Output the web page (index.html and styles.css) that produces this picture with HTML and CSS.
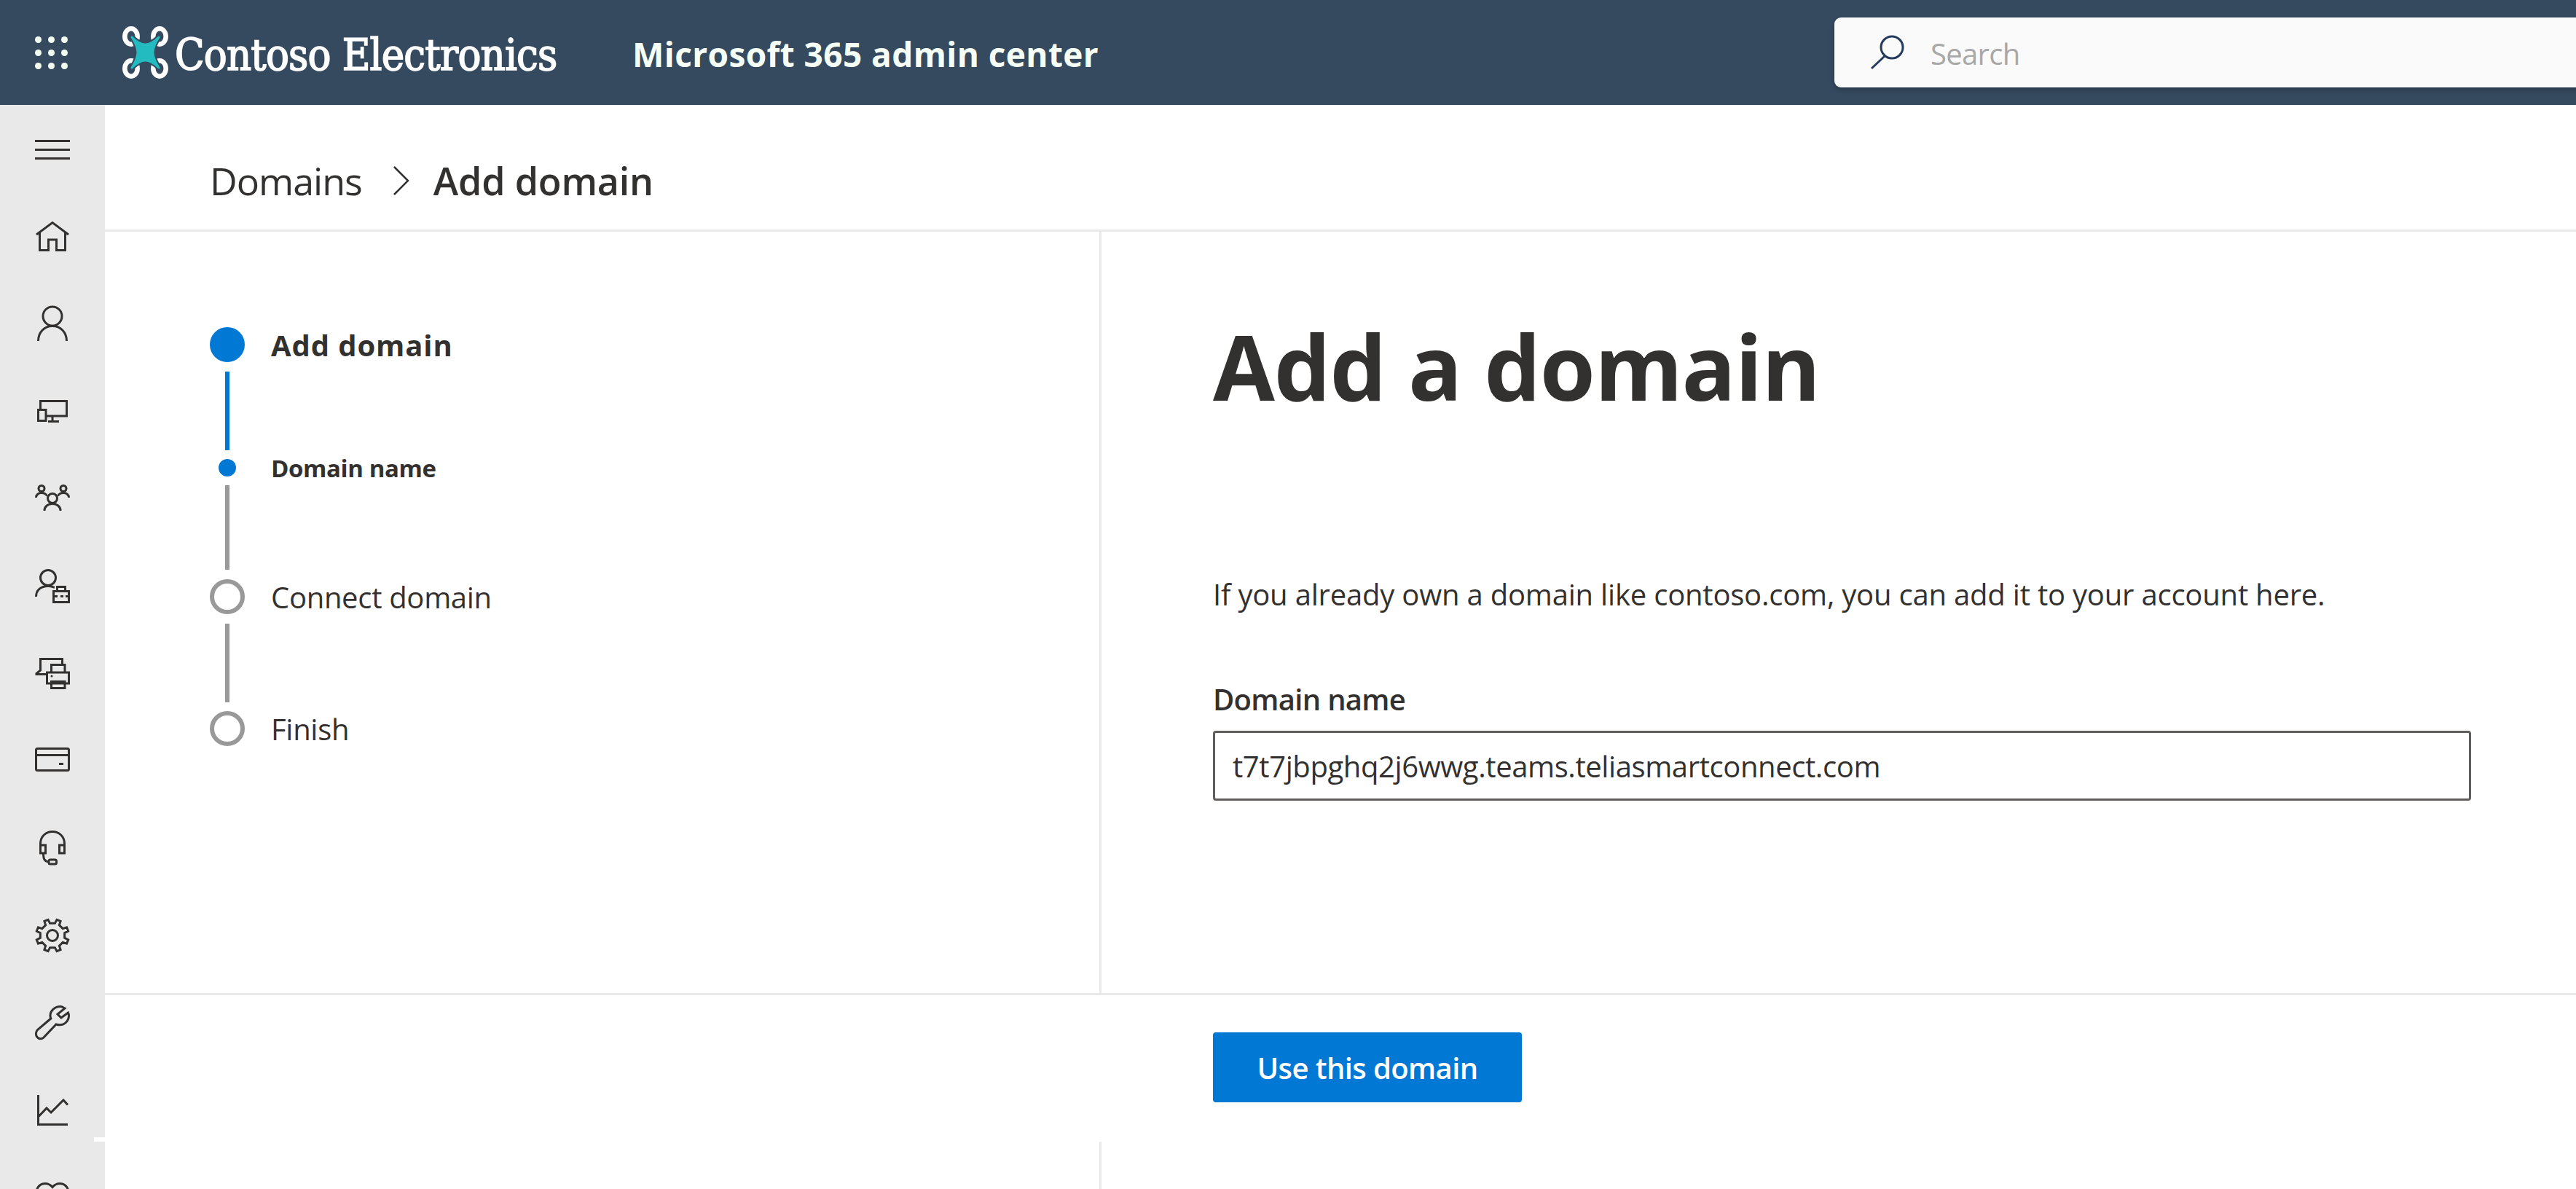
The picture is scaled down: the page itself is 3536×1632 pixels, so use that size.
FILE: index.html
```html
<!DOCTYPE html>
<html lang="en">
<head>
<meta charset="utf-8">
<title>Add domain - Microsoft 365 admin center</title>
<link rel="stylesheet" href="styles.css">
</head>
<body>
<header class="topbar">
  <div class="waffle" aria-label="App launcher">
    <i></i><i></i><i></i><i></i><i></i><i></i><i></i><i></i><i></i>
  </div>
  <svg class="logo" viewBox="0 0 63 72" aria-hidden="true">
    <g fill="none" stroke="#fff" stroke-width="6.5">
      <ellipse cx="12" cy="14" rx="8.7" ry="10.7"/>
      <ellipse cx="51" cy="14" rx="8.7" ry="10.7"/>
      <ellipse cx="12" cy="58" rx="8.7" ry="10.7"/>
      <ellipse cx="51" cy="58" rx="8.7" ry="10.7"/>
    </g>
    <path d="M13 15C19 21 25 25 31.500 25C38 25 44 21 50 15C45 23 42 29 42 36C42 43 45 49 50 57C44 51 38 47 31.500 47C25 47 19 51 13 57C18 49 21 43 21 36C21 29 18 23 13 15Z" fill="#23bbc0" stroke="#354a5f" stroke-width="7" stroke-linejoin="round" paint-order="stroke"/>
    <path d="M13 15C19 21 25 25 31.500 25C38 25 44 21 50 15C45 23 42 29 42 36C42 43 45 49 50 57C44 51 38 47 31.500 47C25 47 19 51 13 57C18 49 21 43 21 36C21 29 18 23 13 15Z" fill="#23bbc0" stroke="#23bbc0" stroke-width="3" stroke-linejoin="round"/>
  </svg>
  <span class="brand">Contoso Electronics</span>
  <span class="product">Microsoft 365 admin center</span>
  <div class="search">
    <svg class="search-icon" viewBox="0 0 48 48" aria-hidden="true">
      <ellipse cx="30" cy="17" rx="15" ry="15" fill="none" stroke="#243a5e" stroke-width="3"/>
      <path d="M20 29L2 46" fill="none" stroke="#243a5e" stroke-width="3"/>
    </svg>
    <span class="search-text">Search</span>
  </div>
</header>

<div class="shell">
  <nav class="rail">
    <div class="rail-item">
      <svg class="ico" viewBox="0 0 48 48"><path d="M0 13.500H48M0 25.500H48M0 37.500H48"/></svg>
    </div>
    <div class="rail-item">
      <svg class="ico" viewBox="0 0 48 48"><path d="M2 22L24 5.500L46 22M6.500 19V43.500H18.500V29H29.500V43.500H41.500V19"/></svg>
    </div>
    <div class="rail-item">
      <svg class="ico" viewBox="0 0 48 48"><circle cx="24" cy="14" r="13"/><path d="M4.500 48C4.500 36 13 27.500 24 27.500C35 27.500 43.500 36 43.500 48"/></svg>
    </div>
    <div class="rail-item">
      <svg class="ico" viewBox="0 0 48 48"><path d="M7.500 21V10.500H43.500V31H16M24 31V38M18 38.500H33"/><rect x="4.500" y="22.500" width="10.500" height="15"/></svg>
    </div>
    <div class="rail-item">
      <svg class="ico" viewBox="0 0 48 48"><circle cx="9" cy="10.500" r="4"/><circle cx="39" cy="10.500" r="4"/><circle cx="24" cy="24" r="6.500"/><path d="M1.500 23C1.500 19 5 16.500 9 16.500C13 16.500 15 18 16.500 20.500M46.500 23C46.500 19 43 16.500 39 16.500C35 16.500 33 18 31.500 20.500M13 41C13 35 18 31.500 24 31.500C30 31.500 35 35 35 41"/></svg>
    </div>
    <div class="rail-item">
      <svg class="ico" viewBox="0 0 48 48"><circle cx="18" cy="13" r="10.500"/><path d="M1.500 39C1.500 30 8 24.500 18 24.500C21 24.500 24 25 27 26.500"/><rect x="25.500" y="31.500" width="21" height="15"/><path d="M30.500 31V25.500H41.500V31M25 38.500H31M35 38.500H39M42 38.500H47"/></svg>
    </div>
    <div class="rail-item">
      <svg class="ico" viewBox="0 0 48 48"><path d="M37.500 12V4.500H7.500V20L2 24.500V25.500H15"/><path d="M22.500 22.500V12.500H41V22.500M16.500 23H46.500V38H16.500ZM22.500 35.500H41V44.500H22.500Z"/><circle class="fill" cx="23" cy="28" r="1.500"/></svg>
    </div>
    <div class="rail-item">
      <svg class="ico" viewBox="0 0 48 48"><rect x="1.500" y="7.500" width="45" height="30" rx="2"/><path d="M1.500 16.500H46.500M33 28.500H39"/></svg>
    </div>
    <div class="rail-item">
      <svg class="ico" viewBox="0 0 48 48"><path d="M7.500 30V18C7.500 8 15 1.500 24 1.500C33 1.500 40.500 8 40.500 18V30"/><path d="M7.500 20H14.500V31H7.500ZM33.500 20H40.500V31H33.500ZM11.500 31C11.500 39 13 42.500 19 43"/><rect x="19" y="40" width="10.500" height="6" rx="2"/></svg>
    </div>
    <div class="rail-item">
      <svg class="ico" viewBox="0 0 48 48"><path d="M40.660 20.610L45.680 17.990L43.580 12.920L38.180 14.620L33.380 9.820L35.080 4.420L30.010 2.320L27.390 7.340H20.610L17.990 2.320L12.920 4.420L14.620 9.820L9.820 14.620L4.420 12.920L2.320 17.990L7.340 20.610V27.390L2.320 30.010L4.420 35.080L9.820 33.380L14.620 38.180L12.920 43.580L17.990 45.680L20.610 40.660H27.390L30.010 45.680L35.080 43.580L33.380 38.180L38.180 33.380L43.580 35.080L45.680 30.010L40.660 27.390Z"/><circle cx="24" cy="24" r="7.500"/></svg>
    </div>
    <div class="rail-item">
      <svg class="ico" viewBox="0 0 48 48"><path d="M35 1.500C27.500 1.500 21 7 21 14C21 15.500 21.300 17 21.800 18L3.500 33.500C.5 36.500 1 41 3 43.500C5.500 46.500 9.500 46.500 12 44L29 26C30.500 26.500 32 26.800 34 26.800C41 26.800 46.500 21 46.500 14C46.500 12.500 46 11 45.500 10L36 17L31 12L41 4C38.500 2.500 37 1.500 35 1.500Z"/></svg>
    </div>
    <div class="rail-item">
      <svg class="ico" viewBox="0 0 48 48"><path d="M4.500 3V43.500H45M4.500 33L16 21L22 27L39 10L45 16.500"/></svg>
    </div>
    <div class="rail-item">
      <svg class="ico" viewBox="0 0 48 48"><path d="M24 9.500C21 6 18 4.500 14 4.500C7 4.500 2 10 2 17C2 27 14 37 24 45C34 37 46 27 46 17C46 10 41 4.500 34 4.500C30 4.500 27 6 24 9.500Z"/></svg>
    </div>
  </nav>

  <main class="content">
    <div class="crumbs">
      <span class="crumb domains">Domains</span>
      <svg class="chev" viewBox="0 0 22 40" aria-hidden="true"><path d="M1 1L20 20L1 39" fill="none" stroke="#323130" stroke-width="2.500"/></svg>
      <span class="crumb current">Add domain</span>
    </div>

    <div class="wizard">
      <aside class="steps">
        <div class="step">
          <span class="marker"><i class="dot big"></i></span>
          <span class="step-label strong">Add domain</span>
        </div>
        <div class="rule blue rule-a"></div>
        <div class="step sub">
          <span class="marker"><i class="dot small"></i></span>
          <span class="step-label sub-label">Domain name</span>
        </div>
        <div class="rule rule-b"></div>
        <div class="step next">
          <span class="marker"><i class="dot ring"></i></span>
          <span class="step-label">Connect domain</span>
        </div>
        <div class="rule rule-c"></div>
        <div class="step next">
          <span class="marker"><i class="dot ring"></i></span>
          <span class="step-label">Finish</span>
        </div>
      </aside>
      <section class="form">
        <h1>Add a domain</h1>
        <p class="intro">If you already own a domain like contoso.com, you can add it to your account here.</p>
        <label class="field-label" for="domain">Domain name</label>
        <input class="field" id="domain" type="text" value="t7t7jbpghq2j6wwg.teams.teliasmartconnect.com">
      </section>
    </div>

    <footer class="actions">
      <button class="primary" type="button">Use this domain</button>
    </footer>
    <div class="tail"><div class="tail-left"></div></div>
  </main>
  <div class="rail-notch"></div>
</div>
</body>
</html>
```

FILE: styles.css
```css
* { box-sizing: border-box; }
html, body { margin: 0; height: 100%; overflow: hidden; background: #fff; }
body { font-family: "Open Sans", "Noto Sans", sans-serif; color: #323130; display: flex; flex-direction: column; }

.topbar { flex: none; height: 144px; background: #354a5f; display: flex; align-items: center; position: relative; overflow: hidden; }
.waffle { width: 45px; margin-left: 48px; display: grid; grid-template-columns: repeat(3, 9px); gap: 9px; }
.waffle i { width: 9px; height: 9px; border-radius: 50%; background: #f4fff4; }
.logo { width: 63px; height: 72px; margin-left: 75px; flex: none; }
.brand { margin-left: 9px; padding-top: 6px; font-family: "DejaVu Serif Condensed", "DejaVu Serif", serif; font-size: 59px; color: #fff; white-space: nowrap; letter-spacing: -.8px; -webkit-text-stroke: 1.6px #fff; width: 540px; }
.product { margin-left: 88px; padding-top: 3px; font-size: 46px; font-weight: 700; letter-spacing: .4px; color: #f6fff6; white-space: nowrap; }
.search { position: absolute; left: 2518px; top: 24px; width: 1100px; height: 96px; background: #fafafa; border-radius: 9px; display: flex; align-items: center; box-shadow: 0 3px 6px rgba(0,0,0,.25); }
.search-icon { width: 48px; height: 48px; margin-left: 49px; flex: none; }
.search-text { margin-left: 35px; padding-top: 2px; font-size: 40px; letter-spacing: -.7px; color: #a8a8a8; }

.shell { flex: 1; display: flex; min-height: 0; position: relative; }
.rail { width: 144px; flex: none; background: #e9e9e9; overflow: hidden; }
.rail-item { height: 120px; display: flex; align-items: center; justify-content: center; }
.ico { width: 48px; height: 48px; overflow: visible; fill: none; stroke: #323130; stroke-width: 3; }
.ico .fill { fill: #323130; stroke: none; }

.content { flex: 1; min-width: 0; display: flex; flex-direction: column; }
.crumbs { flex: none; height: 174px; border-bottom: 3px solid #e9e9e9; padding: 0 0 0 144px; display: flex; align-items: center; }
.crumb { font-size: 52px; line-height: 72px; white-space: nowrap; padding-top: 36px; }
.crumb.domains { letter-spacing: -1px; }
.crumb.current { font-weight: 600; letter-spacing: -.2px; }
.chev { width: 22px; height: 40px; margin: 37px 33px 0 43px; flex: none; }

.wizard { flex: none; height: 1045px; display: flex; }
.steps { width: 1368px; flex: none; border-right: 3px solid #e9e9e9; padding: 131px 0 0 144px; }
.step { display: flex; align-items: center; height: 48px; }
.marker { width: 48px; display: flex; justify-content: center; flex: none; }
.dot { display: block; border-radius: 50%; }
.dot.big { width: 48px; height: 48px; background: #0078d4; }
.dot.small { width: 24px; height: 24px; background: #0078d4; }
.dot.ring { width: 48px; height: 48px; border: 6px solid #999; }
.step-label { margin-left: 36px; font-size: 40px; letter-spacing: -.3px; white-space: nowrap; }
.step-label.strong { font-weight: 700; letter-spacing: .9px; }
.step-label.sub-label { font-size: 33px; font-weight: 700; letter-spacing: -.4px; }
.step.sub { height: 24px; }
.rule { width: 6px; margin-left: 21px; background: #999; }
.rule.blue { background: #0078d4; }
.rule-a { height: 108px; margin-top: 13px; margin-bottom: 12px; }
.rule-b { height: 116px; margin-top: 12px; margin-bottom: 13px; }
.rule-c { height: 108px; margin-top: 13px; margin-bottom: 12px; }

.form { flex: 1; padding: 0 0 0 153px; display: flex; flex-direction: column; align-items: flex-start; }
h1 { margin: 110px 0 0; font-size: 123px; line-height: 150px; font-weight: 700; letter-spacing: -1.1px; white-space: nowrap; }
.intro { margin: 210px 0 0; font-size: 40px; line-height: 56px; letter-spacing: -.2px; white-space: nowrap; }
.field-label { margin-top: 88px; font-size: 40px; line-height: 56px; font-weight: 600; letter-spacing: -.7px; }
.field { margin-top: 15px; width: 1727px; height: 96px; border: 3px solid #605e5c; border-radius: 4px; padding: 0 24px; font: 400 40px "Open Sans", sans-serif; letter-spacing: -.4px; color: #323130; background: #fff; outline: none; }

.actions { flex: none; height: 204px; border-top: 3px solid #e9e9e9; padding: 51px 0 0 1521px; background: #fff; }
.primary { width: 424px; height: 96px; background: #0078d4; border: 0; border-radius: 4px; color: #fff; font: 600 40px "Open Sans", sans-serif; letter-spacing: -.6px; padding: 0; }
.tail { flex: 1; }
.tail-left { width: 1368px; height: 100%; border-right: 3px solid #e9e9e9; }
.rail-notch { position: absolute; left: 129px; top: 1417px; width: 15px; height: 6px; background: #fff; }
```
